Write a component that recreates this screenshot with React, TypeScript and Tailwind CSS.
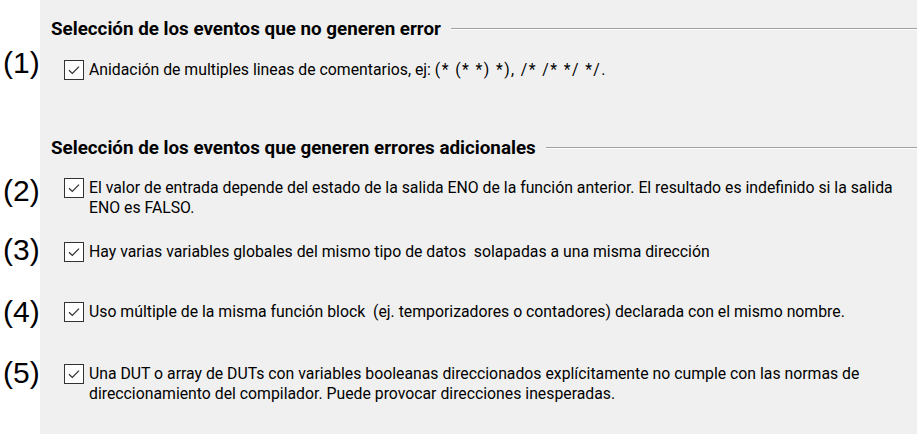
import React from "react";

const font = { fontFamily: "Roboto, 'Noto Sans', sans-serif" };

function Check() {
  return (
    <div className="w-[20px] h-[20px] shrink-0 border border-[#333333] bg-white flex items-center justify-center">
      <svg width="14" height="14" viewBox="0 0 14 14" fill="none">
        <path d="M2 7.2 L5.3 10.4 L12 3.6" stroke="#333333" strokeWidth="1.3" />
      </svg>
    </div>
  );
}

function Label({ n, pt }: { n: number; pt: string }) {
  return (
    <div className={`w-[40px] shrink-0 bg-white relative z-10 ${pt}`}>
      <div className="text-[30px] leading-[30px] text-black pl-[3px] whitespace-nowrap font-['Liberation_Sans',Arial,sans-serif]">
        ({n})
      </div>
    </div>
  );
}

function Title({ text, pt, h }: { text: string; pt: string; h: string }) {
  return (
    <div className={`flex ${h}`}>
      <div className="w-[40px] shrink-0 bg-white" />
      <div className={`flex-1 bg-[#f0f0f0] ${pt} pl-[11px]`}>
        <div className="flex items-center">
          <span className="text-[18.8px] leading-[20px] font-bold text-black whitespace-nowrap" style={font}>
            {text}
          </span>
          <div className="flex-1 ml-[10px] flex flex-col">
            <div className="h-px bg-[#a0a0a0]" />
            <div className="h-px bg-white" />
          </div>
        </div>
      </div>
    </div>
  );
}

function Row({
  n,
  h,
  labelPt,
  boxPt,
  children,
}: {
  n: number;
  h: string;
  labelPt: string;
  boxPt: string;
  children: React.ReactNode;
}) {
  return (
    <div className={`flex ${h}`}>
      <Label n={n} pt={labelPt} />
      <div className={`flex-1 bg-[#f0f0f0] ${boxPt} pl-[24px] flex items-start gap-[5px]`}>
        <Check />
        <div className="text-[15.8px] leading-[20px] text-black whitespace-pre" style={font}>
          {children}
        </div>
      </div>
    </div>
  );
}

export default function App() {
  return (
    <div className="w-[917px] h-[434px] flex flex-col overflow-hidden bg-[#f0f0f0]">
      <Title text="Selección de los eventos que no generen error" pt="pt-[19px]" h="h-[44px]" />
      <Row n={1} h="h-[66px]" labelPt="pt-[4px]" boxPt="pt-[16px]">
        <div>
          Anidación de multiples lineas de comentarios, ej:{" "}
          <span className="tracking-[1.4px]">(* (* *) *), /* /* */ */.</span>
        </div>
      </Row>
      <Title text="Selección de los eventos que generen errores adicionales" pt="pt-[28px]" h="h-[60px]" />
      <Row n={2} h="h-[60px]" labelPt="pt-[6px]" boxPt="pt-[8px]">
        <div>
          El valor de entrada depende del estado de la salida ENO de la función anterior. El resultado es indefinido si la salida
        </div>
        <div>ENO es FALSO.</div>
      </Row>
      <Row n={3} h="h-[60px]" labelPt="pt-[5px]" boxPt="pt-[12px]">
        <div>{"Hay varias variables globales del mismo tipo de datos  solapadas a una misma dirección"}</div>
      </Row>
      <Row n={4} h="h-[60px]" labelPt="pt-[7px]" boxPt="pt-[12px]">
        <div>
          {"Uso múltiple de la misma función block  (ej. temporizadores o contadores) declarada con el mismo nombre."}
        </div>
      </Row>
      <Row n={5} h="flex-1" labelPt="pt-[8px]" boxPt="pt-[14px]">
        <div>
          Una DUT o array de DUTs con variables booleanas direccionados explícitamente no cumple con las normas de
        </div>
        <div>direccionamiento del compilador. Puede provocar direcciones inesperadas.</div>
      </Row>
    </div>
  );
}
